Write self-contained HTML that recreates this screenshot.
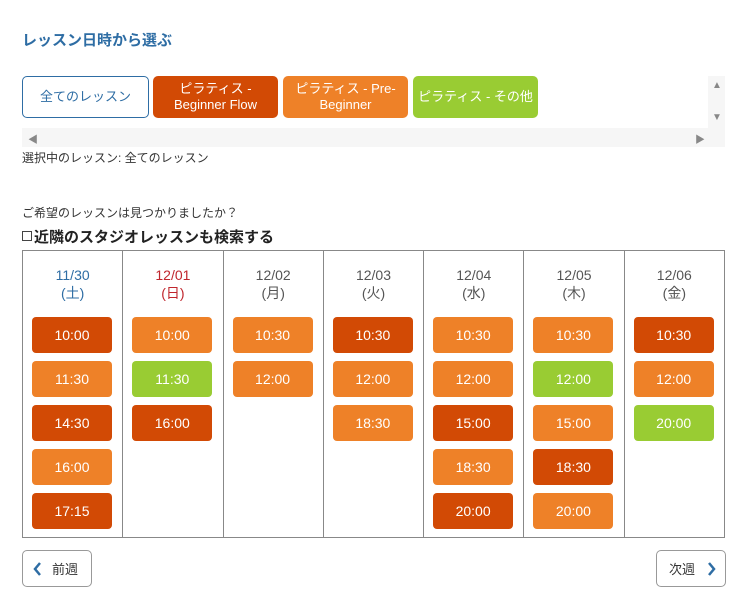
<!DOCTYPE html>
<html><head><meta charset="utf-8"><style>
*{box-sizing:border-box;margin:0;padding:0}
body{width:750px;height:601px;background:#fff;font-family:"Liberation Sans","Noto Sans CJK JP",sans-serif;position:relative;overflow:hidden;color:#333}
.a{position:absolute}
.title{left:22px;top:29px;font-size:15px;color:#2e6da4;font-weight:bold}
.f{position:absolute;top:76px;height:42px;border-radius:5px;color:#fff;font-size:13px;display:flex;align-items:center;justify-content:center;text-align:center;line-height:16px}
.dk{background:#d24a05}.or{background:#ee8128}.gr{background:#99cc33}
.tbl{left:22px;top:250px;width:703px;height:288px;border:1px solid #888;display:flex}
.col{flex:1;border-right:1px solid #888;position:relative}
.col:last-child{border-right:none}
.d{text-align:center;font-size:14px;color:#555;margin-top:15px;line-height:18px}
.t{position:absolute;left:9px;width:80px;height:36px;border-radius:4px;color:#fff;font-size:14px;display:flex;align-items:center;justify-content:center}
.btn{position:absolute;top:550px;height:37px;border:1px solid #999;border-radius:5px;font-size:13px;display:flex;align-items:center;color:#333}
</style></head><body>
<div class="a title">レッスン日時から選ぶ</div>
<div class="f" style="left:22px;width:127px;border:1px solid #2e6da4;color:#2e6da4;background:#fff">全てのレッスン</div>
<div class="f dk" style="left:153px;width:125px">ピラティス -<br>Beginner Flow</div>
<div class="f or" style="left:283px;width:125px">ピラティス - Pre-<br>Beginner</div>
<div class="f gr" style="left:413px;width:125px">ピラティス - その他</div>
<div class="a" style="left:708px;top:76px;width:17px;height:52px;background:#f6f6f6"></div>
<div class="a" style="left:712px;top:80px;font-size:10px;color:#888">▲</div>
<div class="a" style="left:712px;top:112px;font-size:10px;color:#888">▼</div>
<div class="a" style="left:22px;top:128px;width:703px;height:19px;background:#f6f6f6"></div>
<div class="a" style="left:28px;top:131px;font-size:10px;color:#888">◀</div>
<div class="a" style="left:695px;top:131px;font-size:10px;color:#888">▶</div>
<div class="a" style="left:22px;top:149px;font-size:12px">選択中のレッスン: 全てのレッスン</div>
<div class="a" style="left:22px;top:204px;font-size:12px">ご希望のレッスンは見つかりましたか？</div>
<div class="a" style="left:22px;top:231px;width:10px;height:10px;border:1px solid #444"></div>
<div class="a" style="left:34px;top:226px;font-size:15px;font-weight:bold;color:#222">近隣のスタジオレッスンも検索する</div>
<div class="a tbl">
<div class="col"><div class="d" style="color:#2e6da4">11/30<br>(土)</div>
<div class="t dk" style="top:66px">10:00</div><div class="t or" style="top:110px">11:30</div><div class="t dk" style="top:154px">14:30</div><div class="t or" style="top:198px">16:00</div><div class="t dk" style="top:242px">17:15</div></div>
<div class="col"><div class="d" style="color:#c0262d">12/01<br>(日)</div>
<div class="t or" style="top:66px">10:00</div><div class="t gr" style="top:110px">11:30</div><div class="t dk" style="top:154px">16:00</div></div>
<div class="col"><div class="d">12/02<br>(月)</div>
<div class="t or" style="top:66px">10:30</div><div class="t or" style="top:110px">12:00</div></div>
<div class="col"><div class="d">12/03<br>(火)</div>
<div class="t dk" style="top:66px">10:30</div><div class="t or" style="top:110px">12:00</div><div class="t or" style="top:154px">18:30</div></div>
<div class="col"><div class="d">12/04<br>(水)</div>
<div class="t or" style="top:66px">10:30</div><div class="t or" style="top:110px">12:00</div><div class="t dk" style="top:154px">15:00</div><div class="t or" style="top:198px">18:30</div><div class="t dk" style="top:242px">20:00</div></div>
<div class="col"><div class="d">12/05<br>(木)</div>
<div class="t or" style="top:66px">10:30</div><div class="t gr" style="top:110px">12:00</div><div class="t or" style="top:154px">15:00</div><div class="t dk" style="top:198px">18:30</div><div class="t or" style="top:242px">20:00</div></div>
<div class="col"><div class="d">12/06<br>(金)</div>
<div class="t dk" style="top:66px">10:30</div><div class="t or" style="top:110px">12:00</div><div class="t gr" style="top:154px">20:00</div></div>
</div>
<div class="btn" style="left:22px;width:70px"><svg style="margin:0 10px 0 10px" width="9" height="14" viewBox="0 0 9 14"><path d="M7 1L2 7l5 6" stroke="#2e6da4" stroke-width="2.5" fill="none"/></svg>前週</div>
<div class="btn" style="left:656px;width:70px;padding-left:12px">次週<svg style="margin-left:12px" width="9" height="14" viewBox="0 0 9 14"><path d="M2 1l5 6-5 6" stroke="#2e6da4" stroke-width="2.5" fill="none"/></svg></div>
</body></html>
